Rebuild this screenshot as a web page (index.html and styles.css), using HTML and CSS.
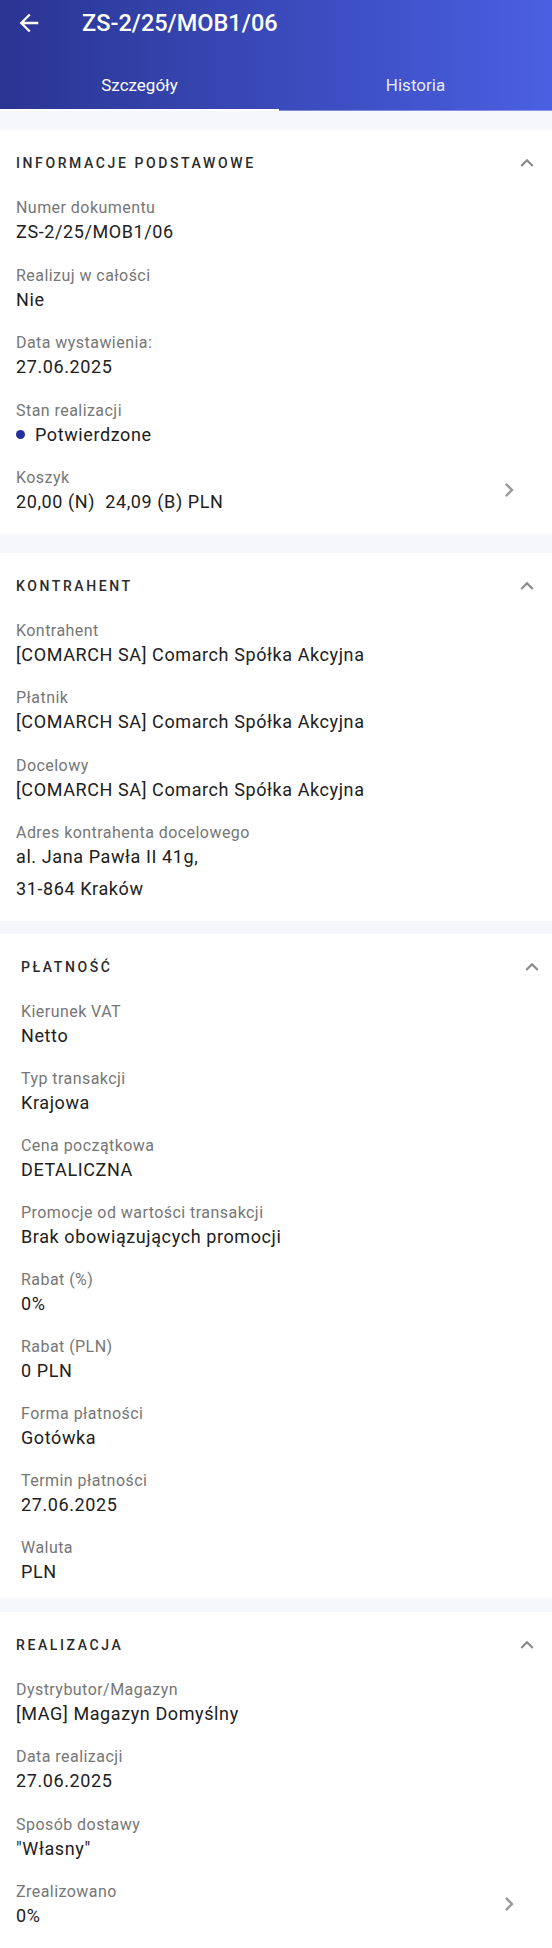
FILE: index.html
```html
<!DOCTYPE html>
<html lang="pl">
<head>
  <meta charset="UTF-8">
  <meta name="viewport" content="width=device-width, initial-scale=1.0">
  <title>ZS-2/25/MOB1/06</title>
  <link rel="stylesheet" href="styles.css">
</head>
<body>
  <!-- App bar with tabs -->
  <header class="appbar">
    <div class="toolbar">
      <svg class="back-icon" viewBox="0 0 24 24"><path d="M20 11H7.83l5.59-5.59L12 4l-8 8 8 8 1.41-1.41L7.83 13H20v-2z"/></svg>
      <h1>ZS-2/25/MOB1/06</h1>
    </div>
    <nav class="tabs">
      <div class="tab active">Szczegóły</div>
      <div class="tab">Historia</div>
    </nav>
  </header>

  <main class="content">
    <section class="card">
      <div class="card-head">
        <h2>Informacje podstawowe</h2>
        <svg class="expand-icon" viewBox="0 0 24 24"><path d="M12 8l-6 6 1.41 1.41L12 10.83l4.59 4.58L18 14z"/></svg>
      </div>
      <div class="field">
        <div class="label">Numer dokumentu</div>
        <div class="value">ZS-2/25/MOB1/06</div>
      </div>
      <div class="field">
        <div class="label">Realizuj w całości</div>
        <div class="value">Nie</div>
      </div>
      <div class="field">
        <div class="label">Data wystawienia:</div>
        <div class="value">27.06.2025</div>
      </div>
      <div class="field">
        <div class="label">Stan realizacji</div>
        <div class="value status"><span class="dot"></span>Potwierdzone</div>
      </div>
      <div class="field field-link">
        <div class="field-body">
          <div class="label">Koszyk</div>
          <div class="value">20,00 (N)&nbsp; 24,09 (B) PLN</div>
        </div>
        <svg class="next-icon" viewBox="0 0 24 24"><path d="M10 6L8.59 7.41 13.17 12l-4.58 4.59L10 18l6-6z"/></svg>
      </div>
    </section>

    <section class="card">
      <div class="card-head">
        <h2>Kontrahent</h2>
        <svg class="expand-icon" viewBox="0 0 24 24"><path d="M12 8l-6 6 1.41 1.41L12 10.83l4.59 4.58L18 14z"/></svg>
      </div>
      <div class="field">
        <div class="label">Kontrahent</div>
        <div class="value">[COMARCH SA] Comarch Spółka Akcyjna</div>
      </div>
      <div class="field">
        <div class="label">Płatnik</div>
        <div class="value">[COMARCH SA] Comarch Spółka Akcyjna</div>
      </div>
      <div class="field">
        <div class="label">Docelowy</div>
        <div class="value">[COMARCH SA] Comarch Spółka Akcyjna</div>
      </div>
      <div class="field">
        <div class="label">Adres kontrahenta docelowego</div>
        <div class="value">al. Jana Pawła II 41g,</div>
        <div class="value value-next">31-864 Kraków</div>
      </div>
    </section>

    <section class="card card-payment">
      <div class="card-head">
        <h2>Płatność</h2>
        <svg class="expand-icon" viewBox="0 0 24 24"><path d="M12 8l-6 6 1.41 1.41L12 10.83l4.59 4.58L18 14z"/></svg>
      </div>
      <div class="field">
        <div class="label">Kierunek VAT</div>
        <div class="value">Netto</div>
      </div>
      <div class="field">
        <div class="label">Typ transakcji</div>
        <div class="value">Krajowa</div>
      </div>
      <div class="field">
        <div class="label">Cena początkowa</div>
        <div class="value">DETALICZNA</div>
      </div>
      <div class="field">
        <div class="label">Promocje od wartości transakcji</div>
        <div class="value">Brak obowiązujących promocji</div>
      </div>
      <div class="field">
        <div class="label">Rabat (%)</div>
        <div class="value">0%</div>
      </div>
      <div class="field">
        <div class="label">Rabat (PLN)</div>
        <div class="value">0 PLN</div>
      </div>
      <div class="field">
        <div class="label">Forma płatności</div>
        <div class="value">Gotówka</div>
      </div>
      <div class="field">
        <div class="label">Termin płatności</div>
        <div class="value">27.06.2025</div>
      </div>
      <div class="field">
        <div class="label">Waluta</div>
        <div class="value">PLN</div>
      </div>
    </section>

    <section class="card">
      <div class="card-head">
        <h2>Realizacja</h2>
        <svg class="expand-icon" viewBox="0 0 24 24"><path d="M12 8l-6 6 1.41 1.41L12 10.83l4.59 4.58L18 14z"/></svg>
      </div>
      <div class="field">
        <div class="label">Dystrybutor/Magazyn</div>
        <div class="value">[MAG] Magazyn Domyślny</div>
      </div>
      <div class="field">
        <div class="label">Data realizacji</div>
        <div class="value">27.06.2025</div>
      </div>
      <div class="field">
        <div class="label">Sposób dostawy</div>
        <div class="value">"Własny"</div>
      </div>
      <div class="field field-link">
        <div class="field-body">
          <div class="label">Zrealizowano</div>
          <div class="value">0%</div>
        </div>
        <svg class="next-icon" viewBox="0 0 24 24"><path d="M10 6L8.59 7.41 13.17 12l-4.58 4.59L10 18l6-6z"/></svg>
      </div>
    </section>
  </main>
</body>
</html>
```

FILE: styles.css
```css
/* General */
body {
  margin: 0;
  font-family: Roboto, 'Noto Sans', sans-serif;
  background: #f6f7fc;
  color: #212121;
}

/* App bar */
.appbar {
  background: linear-gradient(90deg, #2a3592, #4a5fe2);
  color: #fff;
}

.toolbar {
  display: flex;
  align-items: center;
  height: 46px;
}

.back-icon {
  width: 28px;
  height: 28px;
  margin-left: 15px;
  fill: #fff;
}

.toolbar h1 {
  margin: 0 0 0 39px;
  font-size: 23.5px;
  font-weight: 500;
}

.tabs {
  display: flex;
  height: 65px;
}

.tab {
  flex: 1;
  box-sizing: border-box;
  padding-top: 27px;
  text-align: center;
  font-size: 17px;
  line-height: 24px;
  color: rgba(255, 255, 255, 0.9);
  border-bottom: 1px solid rgba(255, 255, 255, 0.35);
}

.tab.active {
  flex: 0 0 279px;
  color: #fff;
  border-bottom: 2px solid #fff;
}

/* Cards */
.content {
  display: flex;
  flex-direction: column;
  gap: 19px;
  padding-top: 19px;
}

.card {
  background: #fff;
}

.card-head {
  display: flex;
  align-items: center;
  justify-content: space-between;
  height: 66px;
  padding: 0 12px 0 16px;
}

.card-head h2 {
  margin: 0;
  font-size: 14px;
  font-weight: 500;
  letter-spacing: 2.6px;
  text-transform: uppercase;
  color: #2b2b2b;
}

.expand-icon {
  width: 26px;
  height: 26px;
  fill: #8a8a8a;
}

.field {
  padding: 0 16px;
  margin-bottom: 19.5px;
}

.label {
  font-size: 16px;
  line-height: 24px;
  letter-spacing: 0.45px;
  color: #767676;
}

.value {
  font-size: 18px;
  line-height: 24px;
  letter-spacing: 0.6px;
  color: #202020;
}

.value-next {
  margin-top: 8px;
}

.status {
  display: flex;
  align-items: center;
}

.dot {
  width: 9px;
  height: 9px;
  margin-right: 10px;
  border-radius: 50%;
  background: #24319a;
}

.field-link {
  display: flex;
  align-items: center;
  padding-right: 29px;
}

.field-body {
  flex: 1;
}

.next-icon {
  width: 28px;
  height: 28px;
  fill: #9a9a9a;
}

/* Payment card sits a bit off the grid */
.card-payment {
  margin-top: -6px;
}

.card-payment .card-head,
.card-payment .field {
  padding-left: 21px;
}

.card-payment .card-head {
  padding-right: 7px;
}

.card-payment .field {
  margin-bottom: 19px;
}

.card-payment .field:last-child {
  margin-bottom: 14px;
}

.card-payment + .card {
  margin-top: -5px;
}
```
